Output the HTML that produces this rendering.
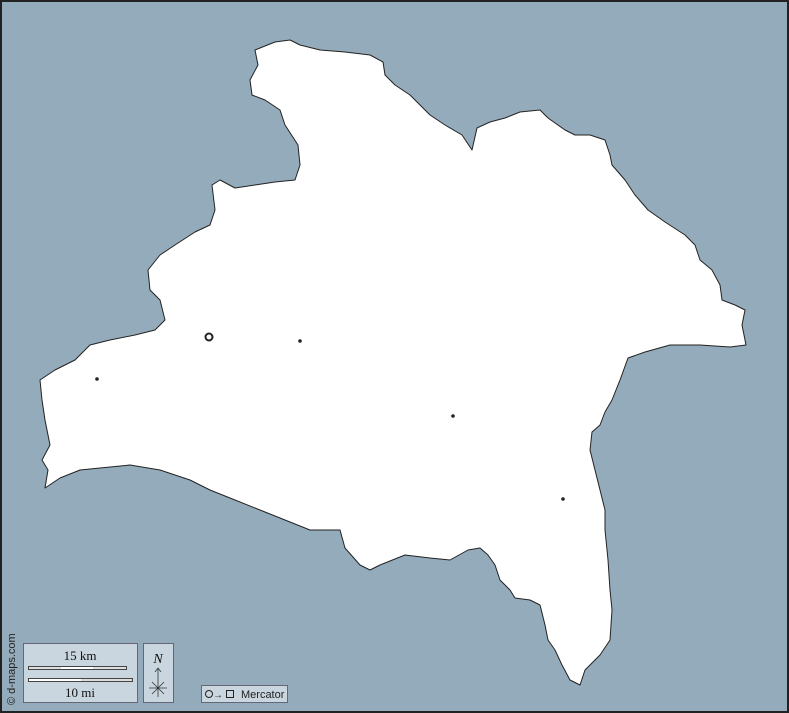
<!DOCTYPE html>
<html><head><meta charset="utf-8"><style>
html,body{margin:0;padding:0;background:#94abbb;}
svg{display:block}
</style></head><body>
<svg width="789" height="713" viewBox="0 0 789 713" xmlns="http://www.w3.org/2000/svg">
<rect x="1" y="1" width="787" height="711" fill="#94abbb" stroke="#222" stroke-width="2"/>
<polygon fill="#fff" stroke="#222" stroke-width="1" stroke-linejoin="round" points="255,50 275,42 290,40 300,45 320,50 345,52 370,55 383,62 385,75 395,85 410,95 420,105 430,115 445,125 462,135 472,150 477,128 490,122 505,118 520,112 540,110 548,118 565,130 575,135 590,135 605,140 610,155 612,165 625,180 635,195 648,210 665,222 685,235 695,245 700,260 712,270 720,285 722,300 735,305 745,310 742,325 746,345 730,347 700,345 670,345 645,352 628,358 620,380 612,400 605,412 600,425 592,432 590,450 595,470 600,490 605,510 605,530 608,560 610,590 612,610 610,640 600,655 585,670 580,685 570,680 562,665 555,650 548,640 545,625 540,605 530,600 515,598 510,590 500,580 495,565 488,555 480,548 468,550 450,560 430,558 405,555 380,565 370,570 360,565 345,548 340,530 310,530 285,520 260,510 235,500 210,490 190,480 160,470 130,465 100,468 80,470 60,478 45,488 48,470 42,460 50,445 45,420 42,400 40,380 55,370 75,360 90,345 110,340 135,335 155,330 165,320 160,300 150,290 148,270 160,255 175,245 195,232 210,225 215,210 212,185 220,180 235,188 255,185 275,182 295,180 300,165 298,145 285,125 280,110 265,100 252,95 250,80 258,65"/>
<circle cx="209" cy="337" r="3.5" fill="none" stroke="#222" stroke-width="2"/>
<circle cx="300" cy="341" r="1.8" fill="#222"/>
<circle cx="97" cy="379" r="1.8" fill="#222"/>
<circle cx="453" cy="416" r="1.8" fill="#222"/>
<circle cx="563" cy="499" r="1.8" fill="#222"/>
<text transform="translate(15,705) rotate(-90)" font-family="Liberation Sans, sans-serif" font-size="11" fill="#222">© d-maps.com</text>
<rect x="23.5" y="643.5" width="114" height="59" fill="#c9d6df" stroke="#667"/>
<text x="80" y="660" text-anchor="middle" font-family="Liberation Serif, serif" font-size="13" fill="#111">15 km</text>
<rect x="28.5" y="666.5" width="98" height="3" fill="#ddd" stroke="#444"/>
<rect x="61" y="667" width="32" height="2" fill="#fff"/>
<rect x="28.5" y="678.5" width="104" height="3" fill="#ddd" stroke="#444"/>
<rect x="29" y="679" width="52" height="2" fill="#fff"/>
<text x="80" y="697" text-anchor="middle" font-family="Liberation Serif, serif" font-size="13" fill="#111">10 mi</text>
<rect x="143.5" y="643.5" width="30" height="59" fill="#c9d6df" stroke="#667"/>
<text x="158" y="663" text-anchor="middle" font-family="Liberation Serif, serif" font-style="italic" font-size="14" fill="#111">N</text>
<path d="M158 669 V697 M149 688 H167 M152 682 L164 694 M164 682 L152 694 M155 672 L158 668 L161 672" stroke="#333" stroke-width="0.8" fill="none"/>
<rect x="201.5" y="685.5" width="86" height="17" fill="#c9d6df" stroke="#667"/>
<circle cx="209" cy="694" r="3.5" fill="none" stroke="#222"/>
<text x="213" y="698" font-family="Liberation Sans, sans-serif" font-size="10" fill="#222">→</text>
<rect x="226.5" y="690.5" width="7" height="7" fill="none" stroke="#222"/>
<text x="241" y="698" font-family="Liberation Sans, sans-serif" font-size="11" fill="#222">Mercator</text>
</svg>
</body></html>
